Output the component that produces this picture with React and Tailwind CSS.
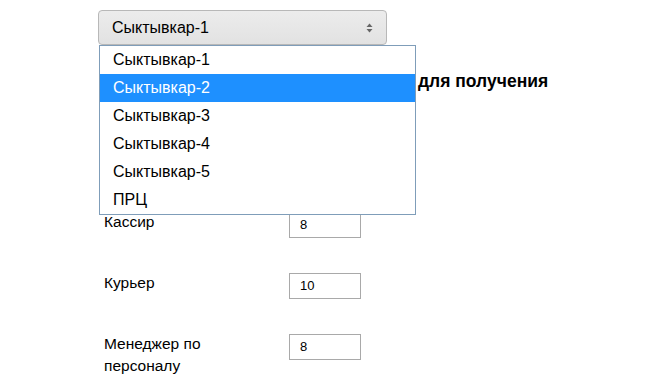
import React from "react";

const options = ["Сыктывкар-1", "Сыктывкар-2", "Сыктывкар-3", "Сыктывкар-4", "Сыктывкар-5", "ПРЦ"];

const rows = [
  { label: "Кассир", value: "8" },
  { label: "Курьер", value: "10" },
  { label: "Менеджер по персоналу", value: "8" },
];

export default function App() {
  return (
    <div className="relative w-[650px] h-[386px] overflow-hidden bg-white text-black font-['Liberation_Sans',Arial,sans-serif]">
      <div className="pl-[98px] pt-[10px]">
        <div className="relative w-[289px]">
          <div className="h-[35px] rounded-[4px] border border-[#b8b8b8] bg-gradient-to-b from-[#ececec] to-[#e2e2e2] flex items-center justify-between pl-[13px] pr-[13px] text-[16px]">
            <span>Сыктывкар-1</span>
            <svg width="7" height="10" viewBox="0 0 7 10" className="mt-[1px]">
              <path d="M3.5 0.5 L6.5 4 L0.5 4 Z" fill="#666" />
              <path d="M3.5 9.5 L6.5 6 L0.5 6 Z" fill="#666" />
            </svg>
          </div>
          <ul className="absolute left-[1px] top-[35px] z-10 w-[317px] border border-[#7f9db9] bg-white text-[16px]">
            {options.map((o, i) => (
              <li
                key={o}
                className={
                  i === 1
                    ? "h-[28px] flex items-center pl-[13px] bg-[#1e90ff] text-white"
                    : "h-[28px] flex items-center pl-[13px] text-black"
                }
              >
                {o}
              </li>
            ))}
          </ul>
        </div>

        <h2 className="mt-[26px] ml-[2px] text-[17.5px] font-bold leading-[21px] whitespace-nowrap">
          <span className="inline-block w-[318px]">Количество сотрудников</span>для получения
        </h2>

        <div className="mt-[120px] ml-[6px] grid grid-cols-[185px_72px] gap-y-[35px]">
          {rows.map((r) => (
            <React.Fragment key={r.label}>
              <div className="w-[140px] text-[15.5px] leading-[22px] -mt-[1px]">{r.label}</div>
              <div className="h-[26px] w-[72px] border border-[#a9a9a9] flex items-center pl-[10px] text-[13px] text-black">
                {r.value}
              </div>
            </React.Fragment>
          ))}
        </div>
      </div>
    </div>
  );
}
